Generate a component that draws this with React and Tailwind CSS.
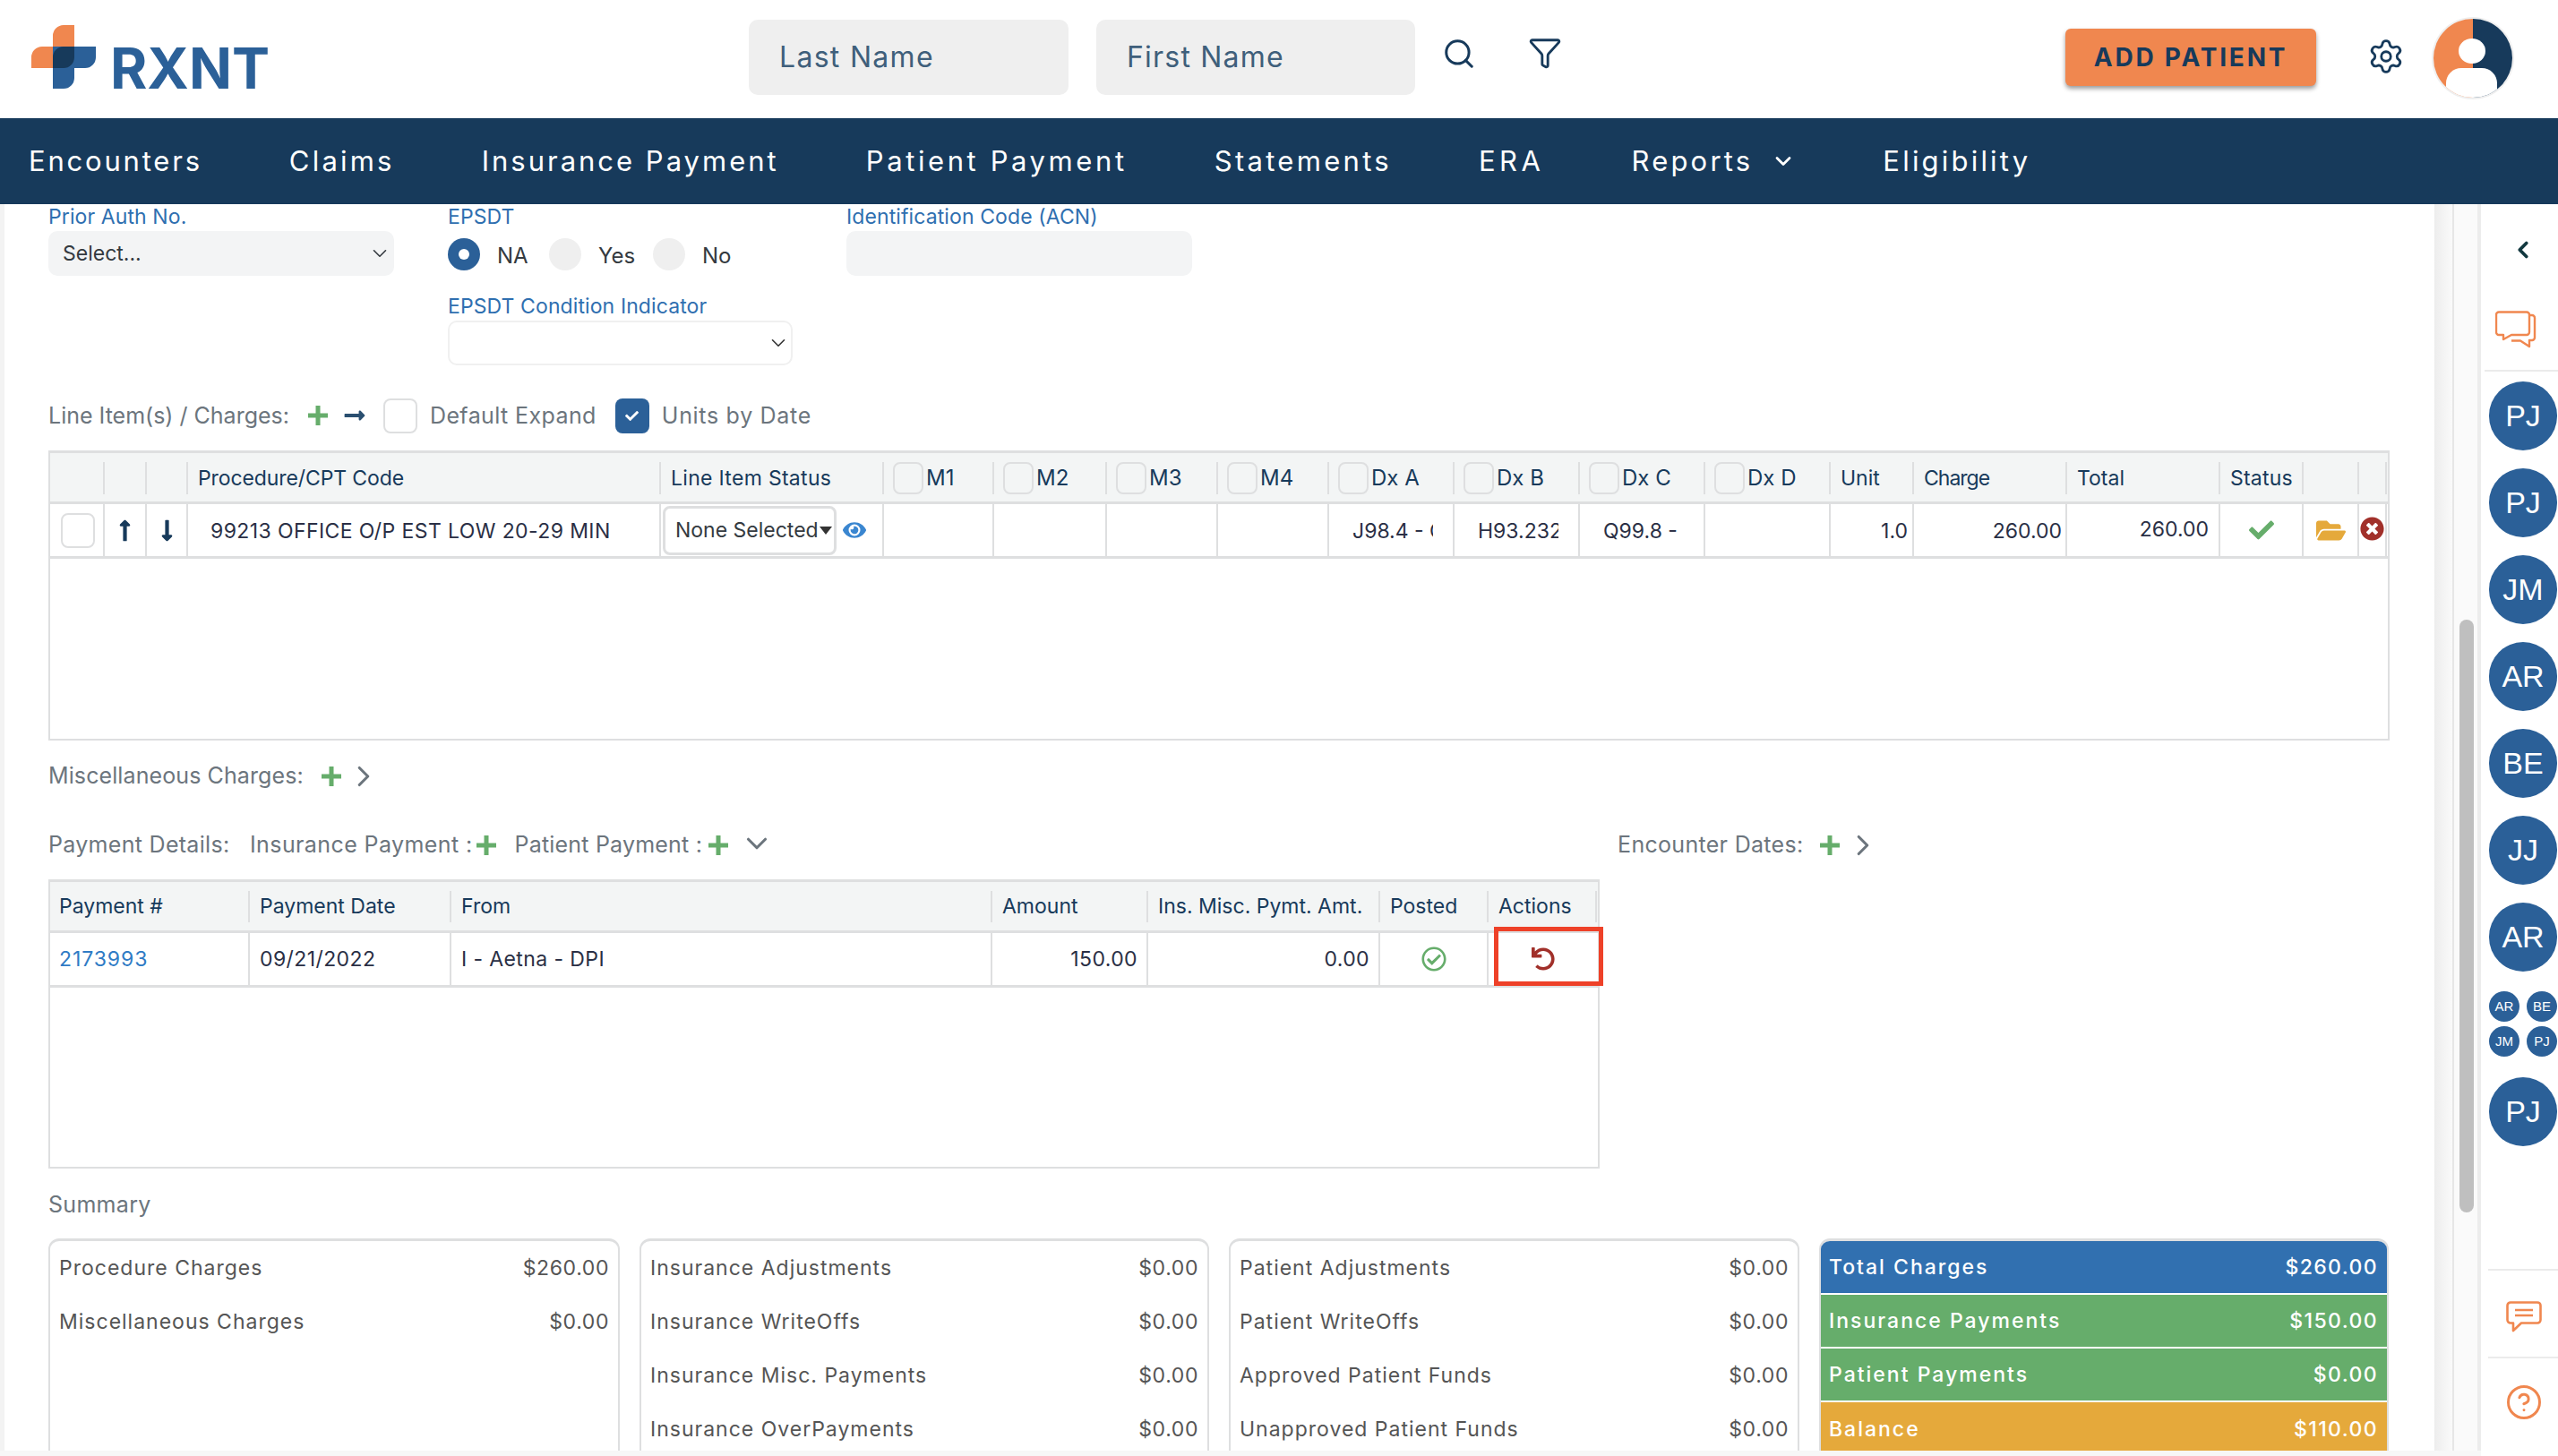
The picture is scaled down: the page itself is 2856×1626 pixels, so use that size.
import React from 'react';
import { Search, Filter, Settings, ChevronDown, ChevronRight, ChevronLeft, CircleHelp } from 'lucide-react';
import { FaCheck, FaEye, FaFolderOpen, FaLongArrowAltDown, FaLongArrowAltRight, FaLongArrowAltUp, FaRegCheckCircle, FaTimesCircle, FaUndo } from 'react-icons/fa';

const navItems = [
  ['Encounters', 'tracking-[2.8px]'],
  ['Claims', 'tracking-[3.2px]'],
  ['Insurance Payment', 'tracking-[3px]'],
  ['Patient Payment', 'tracking-[3.6px]'],
  ['Statements', 'tracking-[3.3px]'],
  ['ERA', 'tracking-[4.5px]'],
];

// Logo mark, two overlapping crosses
function LogoMark() {
  return (
    <svg width="72" height="71" viewBox="0 0 72 71">
      <path d="M48 0H36a12 12 0 0 0-12 12V24H12A12 12 0 0 0 0 36V48H48Z" fill="#F0874F" />
      <path d="M24 71H36a12 12 0 0 0 12-12V48H60a12 12 0 0 0 12-12V24H24Z" fill="#2B6098" />
      <path d="M36 24H48V36a12 12 0 0 1-12 12H24V36a12 12 0 0 1 12-12Z" fill="#173A5B" />
    </svg>
  );
}

function UserAvatar() {
  return (
    <svg width="92" height="96" viewBox="0 0 92 96">
      <defs>
        <clipPath id="avatar-clip">
          <circle cx="46" cy="48" r="44" />
        </clipPath>
      </defs>
      <circle cx="46" cy="48" r="46" fill="#EFEFEF" />
      <g clipPath="url(#avatar-clip)">
        <rect x="0" y="0" width="46" height="96" fill="#F0874F" />
        <rect x="46" y="0" width="46" height="96" fill="#173A5B" />
        <ellipse cx="45" cy="40" rx="15" ry="14" fill="#fff" />
        <path d="M16 96V76a17 17 0 0 1 17-17H56a17 17 0 0 1 17 17V96Z" fill="#fff" />
      </g>
    </svg>
  );
}

function Plus() {
  return (
    <svg width="24" height="24" viewBox="0 0 24 24" className="shrink-0">
      <path d="M9.500 1h5v8.500H23v5h-8.500V23h-5v-8.500H1v-5h8.500Z" fill="#66AD6B" />
    </svg>
  );
}

function Label({ children }) {
  return <div className="h-[30px] pb-[2px] flex items-center text-[23px] tracking-[0.1px] leading-none text-[#2F6FB0] whitespace-nowrap">{children}</div>;
}

function Radio({ checked, label, className }) {
  return (
    <div className={`flex items-center ${className}`}>
      <span className={`w-[36px] h-[36px] rounded-full flex items-center justify-center ${checked ? 'bg-[#2B6098]' : 'bg-[#EFEFEF]'}`}>
        {checked && <span className="w-[12px] h-[12px] rounded-full bg-white" />}
      </span>
      <span className="ml-[19px] pt-[3px] text-[24px] text-[#343A40]">{label}</span>
    </div>
  );
}

function Box({ checked, className = '' }) {
  if (checked) {
    return (
      <span className={`w-[38px] h-[39px] rounded-[8px] bg-[#2B6098] flex items-center justify-center shrink-0 ${className}`}>
        <FaCheck className="text-white" size={15} />
      </span>
    );
  }
  return <span className={`w-[38px] h-[39px] rounded-[8px] border-2 border-[#DEDFE0] bg-white shrink-0 ${className}`} />;
}

const lineHead = [
  { text: '' }, { text: '' }, { text: '' },
  { text: 'Procedure/CPT Code', pad: 'pl-[11px] tracking-[-0.1px]' },
  { text: 'Line Item Status', pad: 'pl-[11px] tracking-[0.3px]' },
  { text: 'M1', box: true }, { text: 'M2', box: true }, { text: 'M3', box: true }, { text: 'M4', box: true },
  { text: 'Dx A', box: true }, { text: 'Dx B', box: true }, { text: 'Dx C', box: true }, { text: 'Dx D', box: true },
  { text: 'Unit', pad: 'pl-[11px]' }, { text: 'Charge', pad: 'pl-[11px] tracking-[-1px]' }, { text: 'Total', pad: 'pl-[11px]' }, { text: 'Status', pad: 'pl-[11px] tracking-[0.2px]' },
  { text: '' }, { text: '' },
];

function LineItemsTable() {
  return (
    <div className="mt-[19px] w-[2614px] h-[324px] border-2 border-t-[3px] border-[#DEDFE0] shrink-0">
      <div className="grid grid-cols-[61px_47px_46px_528px_249px_123px_126px_124px_124px_140px_140px_140px_140px_93px_171px_171px_93px_62px_31px] h-[57px] bg-[#F3F5F5] py-[10px] border-b-[3px] border-[#DEDFE0]">
        {lineHead.map((h, i) => (
          <div key={i} className={`flex items-center border-r-2 border-[#DEDFE0] text-[#173A5B] ${h.box ? 'pl-[10px] text-[24px]' : `text-[23px] ${h.pad || ''}`}`}>
            {h.box && <span className="w-[34px] h-[36px] rounded-[8px] border-2 border-[#DEDFE0] shrink-0" />}
            <span className={h.box ? 'ml-[3px] whitespace-nowrap' : 'whitespace-nowrap'}>{h.text}</span>
          </div>
        ))}
      </div>
      <div className="grid grid-cols-[61px_47px_46px_528px_249px_123px_126px_124px_124px_140px_140px_140px_140px_93px_171px_171px_93px_62px_31px] h-[61px] border-b-[3px] border-[#DEDFE0] text-[23px] text-[#2A2F45]">
        <div className="border-r-2 border-[#DEDFE0] flex items-center pl-[12px]"><Box /></div>
        <div className="border-r-2 border-[#DEDFE0] flex items-center justify-center"><FaLongArrowAltUp className="text-[#173A5B]" size={27} /></div>
        <div className="border-r-2 border-[#DEDFE0] flex items-center justify-center"><FaLongArrowAltDown className="text-[#173A5B]" size={27} /></div>
        <div className="border-r-2 border-[#DEDFE0] flex items-center pl-[25px] pt-[3px] tracking-[0.4px] whitespace-nowrap">99213 OFFICE O/P EST LOW 20-29 MIN</div>
        <div className="border-r-2 border-[#DEDFE0] flex items-center pl-[2px]">
          <div className="w-[194px] h-[55px] border-[3px] border-[#DEDFE0] rounded-[8px] flex items-center pl-[11px] text-[#343A40] whitespace-nowrap">
            <span>None Selected</span>
            <span className="w-0 h-0 ml-[1px] border-x-[7px] border-x-transparent border-t-[9px] border-t-[#333]" />
          </div>
          <FaEye className="ml-[7px] text-[#3A86D0]" size={26} />
        </div>
        <div className="border-r-2 border-[#DEDFE0]" />
        <div className="border-r-2 border-[#DEDFE0]" />
        <div className="border-r-2 border-[#DEDFE0]" />
        <div className="border-r-2 border-[#DEDFE0]" />
        <div className="border-r-2 border-[#DEDFE0] flex items-center pl-[26px] pt-[3px]"><span className="w-[90px] overflow-hidden whitespace-nowrap">J98.4 - Other</span></div>
        <div className="border-r-2 border-[#DEDFE0] flex items-center pl-[26px] pt-[3px]"><span className="w-[90px] overflow-hidden whitespace-nowrap">H93.232 - H</span></div>
        <div className="border-r-2 border-[#DEDFE0] flex items-center pl-[26px] pt-[3px] whitespace-nowrap">Q99.8 -</div>
        <div className="border-r-2 border-[#DEDFE0]" />
        <div className="border-r-2 border-[#DEDFE0] flex items-center justify-end pr-[5px] pt-[3px]">1.0</div>
        <div className="border-r-2 border-[#DEDFE0] flex items-center justify-end pr-[4px] pt-[3px]">260.00</div>
        <div className="border-r-2 border-[#DEDFE0] flex items-center justify-end pr-[11px] pb-[1px]">260.00</div>
        <div className="border-r-2 border-[#DEDFE0] flex items-center justify-center"><FaCheck className="text-[#66AD6B]" size={28} /></div>
        <div className="border-r-2 border-[#DEDFE0] flex items-center justify-center"><FaFolderOpen className="text-[#E5A93B]" size={33} /></div>
        <div className="border-r-2 border-[#DEDFE0] flex items-center justify-center pb-[3px]"><FaTimesCircle className="text-[#A1302A]" size={27} /></div>
      </div>
    </div>
  );
}

function PaymentsTable() {
  const heads = ['Payment #', 'Payment Date', 'From', 'Amount', 'Ins. Misc. Pymt. Amt.', 'Posted', 'Actions'];
  return (
    <div className="mt-[18px] w-[1732px] h-[323px] border-2 border-t-[3px] border-[#DEDFE0] shrink-0">
      <div className="grid grid-cols-[223px_225px_604px_174px_259px_121px_121px] h-[57px] bg-[#F3F5F5] py-[10px] border-b-[3px] border-[#DEDFE0]">
        {heads.map((h, i) => (
          <div key={h} className={`flex items-center border-r-2 border-[#DEDFE0] text-[23px] text-[#173A5B] whitespace-nowrap ${i === 0 ? 'pl-[10px]' : 'pl-[11px]'}`}>{h}</div>
        ))}
      </div>
      <div className="grid grid-cols-[223px_225px_604px_174px_259px_121px_121px] h-[61px] border-b-[3px] border-[#DEDFE0] text-[23px] tracking-[0.4px] text-[#2A2F45]">
        <div className="border-r-2 border-[#DEDFE0] flex items-center pl-[10px] tracking-[0.9px] text-[#2F7BC5]">2173993</div>
        <div className="border-r-2 border-[#DEDFE0] flex items-center pl-[11px]">09/21/2022</div>
        <div className="border-r-2 border-[#DEDFE0] flex items-center pl-[11px]">I - Aetna - DPI</div>
        <div className="border-r-2 border-[#DEDFE0] flex items-center justify-end pr-[10px]">150.00</div>
        <div className="border-r-2 border-[#DEDFE0] flex items-center justify-end pr-[10px]">0.00</div>
        <div className="border-r-2 border-[#DEDFE0] flex items-center justify-center"><FaRegCheckCircle className="text-[#66AD6B]" size={28} /></div>
        <div className="relative flex items-center justify-center">
          <FaUndo className="text-[#A1302A]" size={26} />
          {/* red callout around the undo action */}
          <div className="absolute left-[6px] top-[-7px] w-[122px] h-[66px] border-[5px] border-[#EE4128]" />
        </div>
      </div>
    </div>
  );
}

function SummaryCard({ rows, className }) {
  return (
    <div className={`border-2 border-t-[3px] border-[#DEDFE0] rounded-t-[12px] px-[10px] h-[300px] shrink-0 ${className}`}>
      {rows.map(([name, value]) => (
        <div key={name} className="h-[60px] flex items-center justify-between text-[23px] text-[#555]">
          <span className="tracking-[1px]">{name}</span>
          <span className="tracking-[0.6px]">{value}</span>
        </div>
      ))}
    </div>
  );
}

function TotalRow({ name, value, color, h }) {
  return (
    <div className={`flex items-center justify-between pl-[9px] pr-[10px] text-[23px] font-medium text-white ${color} ${h}`}>
      <span className="tracking-[2px]">{name}</span>
      <span className="tracking-[1.4px]">{value}</span>
    </div>
  );
}

function Initials({ text }) {
  return <div className="w-[76px] h-[77px] rounded-full bg-[#2B6098] flex items-center justify-center text-[34px] text-white font-['Liberation_Sans',sans-serif] shrink-0">{text}</div>;
}

function SmallInitials({ text }) {
  return <div className="w-[34px] h-[34px] rounded-full bg-[#2B6098] flex items-center justify-center text-[15px] text-white font-['Liberation_Sans',sans-serif]">{text}</div>;
}

export default function App() {
  return (
    <div className="w-[2856px] h-[1626px] flex flex-col overflow-hidden bg-white font-['Inter',sans-serif]">
      {/* top bar */}
      <header className="h-[132px] flex items-center shrink-0">
        <div className="ml-[35px] w-[801px] flex items-end shrink-0 h-[71px] self-start mt-[28px]">
          <LogoMark />
          <span className="ml-[16px] text-[63px] leading-[46px] font-bold text-[#2B6098]">RXNT</span>
        </div>
        <div className="w-[357px] h-[84px] mb-[4px] rounded-[10px] bg-[#EFEFEF] flex items-center pl-[34px] text-[32px] tracking-[1.3px] text-[#3F5F7B]">Last Name</div>
        <div className="ml-[31px] w-[356px] h-[84px] mb-[4px] rounded-[10px] bg-[#EFEFEF] flex items-center pl-[34px] text-[32px] tracking-[1.2px] text-[#3F5F7B]">First Name</div>
        <Search className="ml-[30px] mb-[12px] text-[#173A5B]" size={38} strokeWidth={1.9} />
        <Filter className="ml-[58px] mb-[14px] text-[#173A5B]" size={38} strokeWidth={1.8} />
        <button className="ml-[562px] w-[280px] h-[64px] mb-[4px] rounded-[6px] bg-[#F0874F] shadow-[0_3px_5px_rgba(0,0,0,0.4)] text-[28px] font-bold tracking-[2.8px] text-[#173A5B]">ADD PATIENT</button>
        <Settings className="ml-[57px] mb-[6px] text-[#173A5B]" size={42} strokeWidth={1.6} />
        <div className="ml-[30px] mb-[2px]"><UserAvatar /></div>
      </header>

      <nav className="h-[96px] bg-[#173A5B] flex items-center pl-[32px] gap-x-[97px] text-[31px] text-white shrink-0">
        {navItems.map(([item, spacing]) => (
          <span key={item} className={`whitespace-nowrap ${spacing}`}>{item}</span>
        ))}
        <span className="flex items-center whitespace-nowrap tracking-[3.2px]">
          Reports
          <ChevronDown className="ml-[20px]" size={28} strokeWidth={2.4} />
        </span>
        <span className="tracking-[3.2px]">Eligibility</span>
      </nav>

      <div className="flex-1 flex min-h-0">
        <div className="w-[2770px] flex flex-col">
          <div className="flex-1 flex min-h-0">
            <main className="w-[2718px] border-l-[5px] border-[#F3F3F3] pl-[49px] overflow-hidden flex flex-col">
              {/* form fields */}
              <div className="grid grid-cols-[386px_385px_386px] gap-x-[60px] shrink-0">
                <div>
                  <Label>Prior Auth No.</Label>
                  <div className="h-[50px] rounded-[10px] bg-[#F3F4F5] flex items-center justify-between pl-[16px] pr-[3px] text-[23px] text-[#343A40]">
                    Select...
                    <ChevronDown size={26} strokeWidth={1.5} />
                  </div>
                </div>
                <div>
                  <Label>EPSDT</Label>
                  <div className="h-[50px] pt-[2px] flex items-center">
                    <Radio checked label="NA" className="w-[113px]" />
                    <Radio label="Yes" className="w-[116px]" />
                    <Radio label="No" />
                  </div>
                  <div className="mt-[20px]"><Label>EPSDT Condition Indicator</Label></div>
                  <div className="h-[50px] rounded-[10px] border-2 border-[#F0F0F0] flex items-center justify-end pr-[1px]">
                    <ChevronDown className="text-[#333]" size={26} strokeWidth={1.5} />
                  </div>
                </div>
                <div>
                  <Label>Identification Code (ACN)</Label>
                  <div className="h-[50px] rounded-[10px] bg-[#F3F4F5]" />
                </div>
              </div>

              <div className="mt-[36px] h-[40px] flex items-center text-[25px] text-[#6C757D] shrink-0">
                <span className="pt-[2px] whitespace-nowrap">Line Item(s) / Charges:</span>
                <span className="ml-[20px]"><Plus /></span>
                <FaLongArrowAltRight className="ml-[16px] text-[#2A4F70]" size={26} />
                <Box className="ml-[19px]" />
                <span className="ml-[14px] pt-[2px] tracking-[0.4px] whitespace-nowrap">Default Expand</span>
                <Box checked className="ml-[21px]" />
                <span className="ml-[14px] pt-[2px] tracking-[0.7px] whitespace-nowrap">Units by Date</span>
              </div>

              <LineItemsTable />

              <div className="mt-[20px] h-[40px] flex items-center text-[25px] text-[#6C757D] shrink-0">
                <span className="tracking-[0.1px]">Miscellaneous Charges:</span>
                <span className="ml-[19px]"><Plus /></span>
                <ChevronRight className="ml-[5px]" size={38} strokeWidth={2} />
              </div>

              <div className="mt-[37px] h-[40px] flex items-center text-[25px] text-[#6C757D] shrink-0">
                <span className="w-[225px] tracking-[0.3px]">Payment Details:</span>
                <span className="tracking-[0.4px]">Insurance Payment :</span>
                <span className="ml-[3px]"><Plus /></span>
                <span className="ml-[20px] tracking-[0.2px]">Patient Payment :</span>
                <span className="ml-[6px]"><Plus /></span>
                <ChevronDown className="ml-[12px] mb-[4px]" size={38} strokeWidth={2} />
                <span className="ml-[942px] tracking-[0.3px]">Encounter Dates:</span>
                <span className="ml-[18px]"><Plus /></span>
                <ChevronRight className="ml-[6px]" size={38} strokeWidth={2} />
              </div>

              <PaymentsTable />

              <div className="mt-[25px] h-[32px] flex items-center text-[25px] tracking-[0.3px] text-[#6C757D] shrink-0">Summary</div>

              <div className="mt-[21px] flex gap-x-[22px]">
                <SummaryCard
                  className="w-[638px]"
                  rows={[['Procedure Charges', '$260.00'], ['Miscellaneous Charges', '$0.00']]}
                />
                <SummaryCard
                  className="w-[636px]"
                  rows={[['Insurance Adjustments', '$0.00'], ['Insurance WriteOffs', '$0.00'], ['Insurance Misc. Payments', '$0.00'], ['Insurance OverPayments', '$0.00']]}
                />
                <SummaryCard
                  className="w-[637px]"
                  rows={[['Patient Adjustments', '$0.00'], ['Patient WriteOffs', '$0.00'], ['Approved Patient Funds', '$0.00'], ['Unapproved Patient Funds', '$0.00']]}
                />
                <div className="w-[636px] h-[300px] border-2 border-t-[3px] border-[#DEDFE0] rounded-t-[12px] overflow-hidden flex flex-col gap-y-[2px] shrink-0">
                  <TotalRow name="Total Charges" value="$260.00" color="bg-[#3170B0]" h="h-[58px]" />
                  <TotalRow name="Insurance Payments" value="$150.00" color="bg-[#66AD6B]" h="h-[58px]" />
                  <TotalRow name="Patient Payments" value="$0.00" color="bg-[#66AD6B]" h="h-[58px]" />
                  <TotalRow name="Balance" value="$110.00" color="bg-[#E5A93B]" h="h-[62px] items-start pt-[13px]" />
                </div>
              </div>
            </main>

            {/* vertical scrollbar */}
            <div className="w-[52px] flex shrink-0">
              <div className="w-[20px] bg-gradient-to-r from-[#EDEDED] to-[#FAFAFA]" />
              <div className="w-[2px] bg-[#E6E6E6]" />
              <div className="flex-1 bg-[#FAFAFA] pl-[6px] pt-[464px]">
                <div className="w-[16px] h-[662px] rounded-full bg-[#BFBFBF]" />
              </div>
              <div className="w-[4px] bg-[#ECECEC]" />
            </div>
          </div>
          <div className="h-[6px] bg-[#F7F7F7] shrink-0" />
        </div>

        {/* right rail */}
        <aside className="w-[86px] flex flex-col items-start pl-[9px] shrink-0">
          <ChevronLeft className="mt-[36px] ml-[23px] text-[#12383F]" size={30} strokeWidth={3} />
          <svg className="mt-[53px] ml-[7px]" width="46" height="42" viewBox="0 0 46 42" fill="none" stroke="#F0874F" strokeWidth="2.4" strokeLinejoin="round">
            <path d="M4 1.500H35a3 3 0 0 1 3 3V24a3 3 0 0 1-3 3H18L9 32V27H4a3 3 0 0 1-3-3V4.500a3 3 0 0 1 3-3Z" />
            <path d="M38 5h3a3 3 0 0 1 3 3V30a3 3 0 0 1-3 3h-3v7L28 33.500H18" />
          </svg>
          <div className="mt-[24px] -ml-[5px] w-[82px] h-[2px] bg-[#EBEBEB]" />
          <div className="mt-[11px] flex flex-col gap-y-[20px]">
            <Initials text="PJ" />
            <Initials text="PJ" />
            <Initials text="JM" />
            <Initials text="AR" />
            <Initials text="BE" />
            <Initials text="JJ" />
            <Initials text="AR" />
          </div>
          <div className="mt-[22px] grid grid-cols-[34px_34px] gap-x-[8px] gap-y-[5px]">
            <SmallInitials text="AR" />
            <SmallInitials text="BE" />
            <SmallInitials text="JM" />
            <SmallInitials text="PJ" />
          </div>
          <div className="mt-[23px]"><Initials text="PJ" /></div>
          <div className="mt-[137px] -ml-[1px] w-[78px] h-[2px] bg-[#EBEBEB]" />
          <svg className="mt-[34px] ml-[19px]" width="40" height="35" viewBox="0 0 40 35" fill="none" stroke="#F0874F" strokeWidth="2.6" strokeLinejoin="round">
            <path d="M5 1.500H35a3.500 3.500 0 0 1 3.500 3.500V21a3.500 3.500 0 0 1-3.500 3.500H17L8 33V24.500H5A3.500 3.500 0 0 1 1.500 21V5A3.500 3.500 0 0 1 5 1.500Z" />
            <path d="M10 10H30M10 16H30" />
          </svg>
          <div className="mt-[27px] -ml-[1px] w-[78px] h-[2px] bg-[#EBEBEB]" />
          <CircleHelp className="mt-[28px] ml-[18px] text-[#F0874F]" size={42} strokeWidth={1.7} />
        </aside>
      </div>
    </div>
  );
}
